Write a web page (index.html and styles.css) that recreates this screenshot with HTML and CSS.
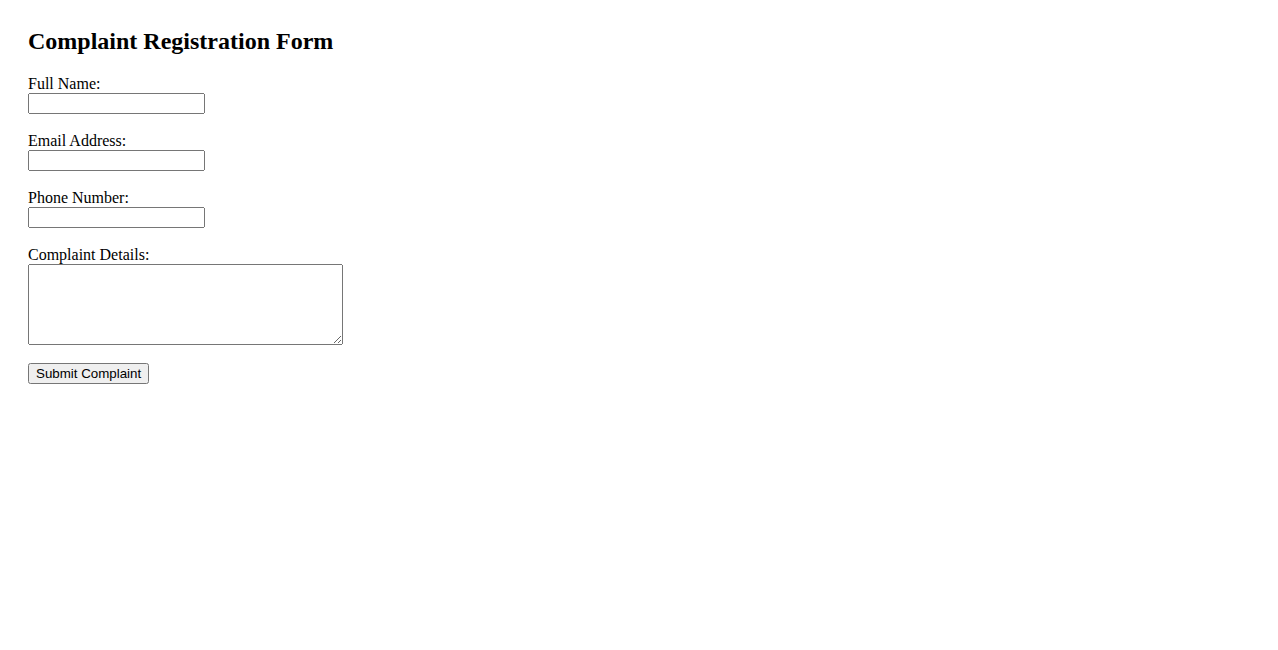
FILE: index.html
```html
<!DOCTYPE html>
<html lang="en">
<head>
<meta charset="utf-8">
<title>Complaint Registration Form</title>
<link rel="stylesheet" href="styles.css">
</head>
<body>
<div class="page">
  <h2 class="title">Complaint Registration Form</h2>
  <form class="form">
    <div class="group">
      <label class="label" for="name">Full Name:</label>
      <input class="field" type="text" id="name">
    </div>
    <div class="group">
      <label class="label" for="email">Email Address:</label>
      <input class="field" type="email" id="email">
    </div>
    <div class="group">
      <label class="label" for="phone">Phone Number:</label>
      <input class="field" type="tel" id="phone">
    </div>
    <div class="group">
      <label class="label" for="details">Complaint Details:</label>
      <textarea class="area" id="details"></textarea>
    </div>
    <div class="actions">
      <button class="btn" type="submit">Submit Complaint</button>
    </div>
  </form>
</div>
</body>
</html>
```
FILE: styles.css
```css
html, body {
  background: #fff;
}
body {
  margin: 8px;
  font-family: "Liberation Serif", "Times New Roman", serif;
  font-size: 16px;
  color: #000;
}
.page {
  padding: 20px;
}
.title {
  font-size: 24px;
  font-weight: bold;
  margin: 0 0 20px 0;
}
.form {
  display: flex;
  flex-direction: column;
  align-items: flex-start;
}
.group {
  display: flex;
  flex-direction: column;
  align-items: flex-start;
  margin-bottom: 18px;
}
.label {
  display: block;
}
.field {
  display: block;
  width: 177px;
  height: 21px;
  box-sizing: border-box;
  margin: 0;
  font-family: "Liberation Sans", Arial, sans-serif;
  font-size: 13.33px;
}
.area {
  display: block;
  width: 315px;
  height: 81px;
  box-sizing: border-box;
  margin: 0;
  font-family: "Liberation Mono", monospace;
  font-size: 13.33px;
}
.btn {
  font-family: "Liberation Sans", Arial, sans-serif;
  font-size: 13.33px;
  height: 21px;
  margin: 0;
  padding: 1px 6px;
}
```
